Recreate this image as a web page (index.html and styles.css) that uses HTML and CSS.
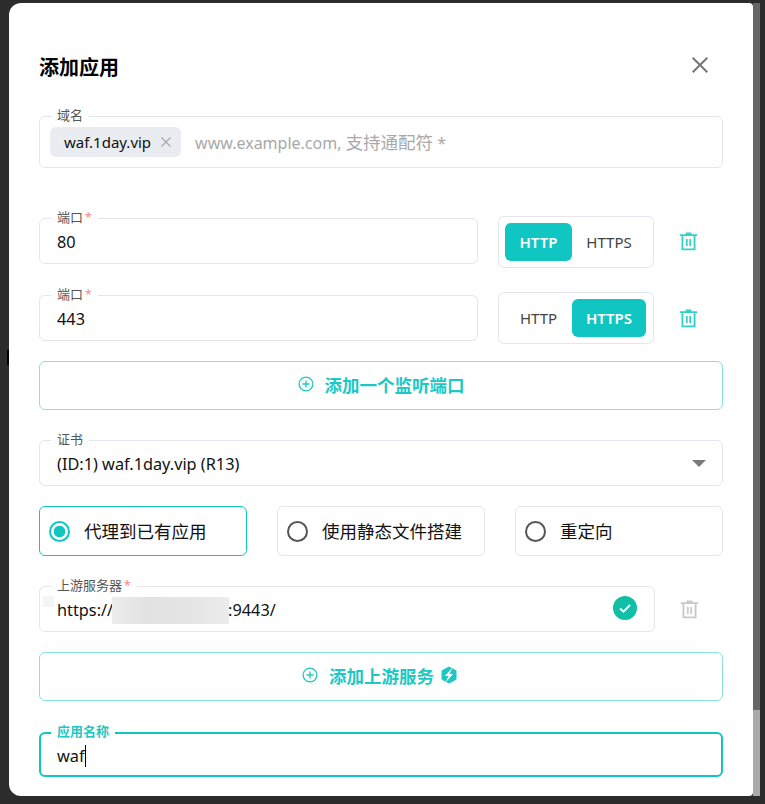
FILE: index.html
```html
<!DOCTYPE html>
<html lang="zh">
<head>
  <meta charset="UTF-8" />
  <title>添加应用</title>
  <link rel="stylesheet" href="styles.css">
</head>
<body>

  <span class="bg-mark"></span>

  <div class="dialog">
    <div class="dialog-head">
      <h2 class="dialog-title">添加应用</h2>
      <svg class="close-icon" viewBox="0 0 16 16"><path d="M1.500 1.500l13 13M14.500 1.500l-13 13" /></svg>
    </div>

    <!-- domain -->
    <div class="field field-domain">
      <span class="field-label">域名</span>
      <span class="chip">waf.1day.vip
        <svg class="chip-x" viewBox="0 0 10 10"><path d="M.5.5l9 9M9.500.500l-9 9" /></svg>
      </span>
      <span class="placeholder">www.example.com, <span class="zh">支持通配符</span> *</span>
    </div>

    <!-- ports -->
    <div class="port-row port-row-first">
      <div class="field field-port">
        <span class="field-label">端口<i class="req">*</i></span>
        80
      </div>
      <div class="toggle">
        <span class="toggle-btn http active">HTTP</span>
        <span class="toggle-btn https">HTTPS</span>
      </div>
      <svg class="trash" viewBox="0 0 18 18"><use href="#trash-icon" /></svg>
    </div>

    <div class="port-row">
      <div class="field field-port">
        <span class="field-label">端口<i class="req">*</i></span>
        443
      </div>
      <div class="toggle">
        <span class="toggle-btn http">HTTP</span>
        <span class="toggle-btn https active">HTTPS</span>
      </div>
      <svg class="trash" viewBox="0 0 18 18"><use href="#trash-icon" /></svg>
    </div>

    <div class="add-btn add-port">
      <svg class="plus-icon" viewBox="0 0 16 16"><circle cx="8" cy="8" r="6.900" /><path d="M8 4.500v7M4.500 8h7" /></svg>
      添加一个监听端口
    </div>

    <!-- certificate -->
    <div class="field field-cert">
      <span class="field-label">证书</span>
      (ID:1) waf.1day.vip (R13)
      <span class="caret"></span>
    </div>

    <div class="mode-row">
      <div class="mode selected"><span class="radio"></span><span class="mode-text">代理到已有应用</span></div>
      <div class="mode"><span class="radio"></span><span class="mode-text">使用静态文件搭建</span></div>
      <div class="mode"><span class="radio"></span><span class="mode-text">重定向</span></div>
    </div>

    <!-- upstream -->
    <div class="port-row upstream-row">
      <div class="field field-upstream">
        <span class="field-label">上游服务器<i class="req">*</i></span>
        <span class="smudge"></span>
        https://<span class="masked"></span>:9443/
        <svg class="check" viewBox="0 0 24 24"><circle cx="12" cy="12" r="12" /><path d="M7 12.500l3.500 3.200L17 9" /></svg>
      </div>
      <svg class="trash off" viewBox="0 0 18 18"><use href="#trash-icon" /></svg>
    </div>

    <div class="add-btn add-upstream">
      <svg class="plus-icon" viewBox="0 0 16 16"><circle cx="8" cy="8" r="6.900" /><path d="M8 4.500v7M4.500 8h7" /></svg>
      添加上游服务
      <svg class="pro-icon" viewBox="0 0 18 18">
        <path class="pro-hex" d="M9 1.500l6.500 3.700v7.600L9 16.500l-6.500-3.700V5.200z" />
        <path class="pro-bolt" d="M12.500 1.500L5 10h3.500l-3 6.500L13 8H9.500z" />
      </svg>
    </div>

    <div class="field field-name">
      <span class="field-label">应用名称</span>
      waf<span class="cursor"></span>
    </div>
  </div>

  <div class="scrollbar"><div class="scroll-thumb"></div></div>

  <svg class="defs" width="0" height="0">
    <symbol id="trash-icon" viewBox="0 0 18 18">
      <path d="M6.500 1.300h5v1.400h-5zM1.500 2.700h15v1.500h-15zM3 4.200h1.600v10.700h8.800V4.200H15v12.300H3zM6.800 6.800h1.500v6H6.800zM9.700 6.800h1.500v6H9.700z" />
    </symbol>
  </svg>
</body>
</html>
```

FILE: styles.css
```css
html, body {
  height: 100%;
}

body {
  margin: 0;
  background: #2c2c2c;
  font-family: "Noto Sans", "Noto Sans CJK SC", sans-serif;
  font-size: 16.3px;
  color: #111;
  overflow: hidden;
  display: flex;
  align-items: flex-start;
  padding: 3px 0 0 9px;
  box-sizing: border-box;
}

/* page behind the dialog */
.bg-mark {
  position: absolute;
  left: 7px;
  top: 350px;
  width: 2px;
  height: 15px;
  background: #000;
}

/* dialog */
.dialog {
  width: 744px;
  height: 793px;
  box-sizing: border-box;
  padding: 0 30px;
  background: #fff;
  border-radius: 12px 4px 4px 12px;
  overflow: hidden;
}

.scrollbar {
  width: 7px;
  height: 793px;
  background: #aaa;
}

.scroll-thumb {
  height: 707px;
  background: #666;
}

.dialog-head {
  display: flex;
  justify-content: space-between;
  align-items: center;
  height: 44px;
  margin: 41px 0 28px;
}

.dialog-title {
  margin: 0;
  font-size: 20px;
  font-weight: 700;
  color: #000;
}

.close-icon {
  width: 18px;
  height: 18px;
  margin: 0 14px 2px 0;
  fill: none;
  stroke: #777;
  stroke-width: 1.800;
}

/* fields */
.field {
  position: relative;
  display: flex;
  align-items: center;
  box-sizing: border-box;
  height: 46px;
  padding: 2px 17px 0;
  border: 1px solid #e3e6ef;
  border-radius: 6px;
  line-height: 24px;
}

.field-label {
  position: absolute;
  left: 11px;
  top: -10.500px;
  padding: 0 6px;
  background: #fff;
  font-size: 13px;
  line-height: 16px;
  color: #555;
}

.req {
  font-style: normal;
  font-size: 12px;
  color: #f88;
  margin-left: 2px;
}

.field-domain {
  height: 52px;
  padding: 0 10px;
}

.chip {
  display: flex;
  align-items: center;
  height: 30px;
  padding: 0 10px 0 14px;
  background: #e9ecf1;
  border-radius: 6px;
  font-size: 15px;
}

.chip-x {
  width: 10px;
  height: 10px;
  margin-left: 10px;
  fill: none;
  stroke: #aaa;
  stroke-width: 1.300;
}

.placeholder {
  margin: 1px 0 0 14px;
  font-size: 16px;
  color: #a8a8a8;
}

.zh {
  font-size: 17.500px;
}

.port-row {
  display: flex;
  align-items: center;
  margin-top: 24px;
}

.port-row-first {
  margin-top: 48px;
}

.port-row-first .field,
.port-row-first .trash {
  margin-bottom: 2px;
}

.field-port {
  flex: 1;
}

.toggle {
  display: flex;
  box-sizing: border-box;
  width: 156px;
  height: 52px;
  margin-left: 20px;
  padding: 6px;
  border: 1px solid #e3e6ef;
  border-radius: 6px;
}

.toggle-btn {
  display: flex;
  align-items: center;
  justify-content: center;
  height: 38px;
  border-radius: 6px;
  font-size: 15px;
  color: #444;
}

.toggle-btn.http {
  width: 67px;
}

.toggle-btn.https {
  width: 74px;
}

.toggle-btn.active {
  background: #0fc6c2;
  color: #fff;
  font-weight: 600;
}

.trash {
  width: 21px;
  height: 21px;
  margin: 0 24px;
  fill: #35d0cc;
}

.trash.off {
  margin-right: 23px;
  fill: #c9c9c9;
}

/* add buttons */
.add-btn {
  display: flex;
  align-items: center;
  justify-content: center;
  box-sizing: border-box;
  height: 49px;
  margin-top: 17px;
  padding-bottom: 3px;
  border: 1px solid #87e3e0;
  border-radius: 6px;
  font-size: 17.500px;
  font-weight: 600;
  color: #1cc8c4;
}

.plus-icon {
  width: 16px;
  height: 16px;
  margin-right: 11px;
  fill: none;
  stroke: #1cc8c4;
  stroke-width: 1.300;
}

.pro-icon {
  width: 18px;
  height: 18px;
  margin: 0 2px 0 6px;
}

.pro-hex {
  fill: #1cc8c4;
  stroke: #1cc8c4;
  stroke-width: 2;
  stroke-linejoin: round;
}

.pro-bolt {
  fill: #fff;
}

.field-cert {
  margin-top: 30px;
}

.caret {
  position: absolute;
  right: 16px;
  top: 19px;
  border-left: 7px solid transparent;
  border-right: 7px solid transparent;
  border-top: 7px solid #7a7a7a;
}

/* modes */
.mode-row {
  display: flex;
  gap: 30px;
  margin-top: 20px;
}

.mode {
  flex: 1;
  display: flex;
  align-items: center;
  box-sizing: border-box;
  height: 50px;
  padding: 0 9px;
  border: 1px solid #e3e6ef;
  border-radius: 6px;
  font-size: 17.500px;
}

.mode.selected {
  border-color: #0fc6c2;
}

.mode-text {
  margin-bottom: 2px;
}

.radio {
  width: 21px;
  height: 21px;
  margin-right: 14px;
  box-sizing: border-box;
  border: 2px solid #555;
  border-radius: 50%;
}

.mode.selected .radio {
  border-color: #0fc6c2;
  background: radial-gradient(circle, #0fc6c2 0 5.500px, #fff 6px);
}

/* upstream */
.upstream-row {
  margin-top: 30px;
}

.field-upstream {
  flex: 1;
}

.smudge {
  position: absolute;
  left: 3px;
  top: 9px;
  width: 11px;
  height: 11px;
  background: #f4f4f4;
}

.masked {
  width: 117px;
  height: 27px;
  margin: 0 -1px;
  background: linear-gradient(90deg, #ececec, #e2e2e2 30%, #e5e5e5 70%, #ececec);
}

.check {
  position: absolute;
  right: 17px;
  top: 9px;
  width: 24px;
  height: 24px;
  fill: #10bfa5;
}

.check path {
  fill: none;
  stroke: #fff;
  stroke-width: 2;
}

.add-upstream {
  margin-top: 20px;
}

/* focused name field */
.field-name {
  height: 45px;
  margin-top: 31px;
  border: 2px solid #0fc6c2;
  padding: 2px 16px 0;
}

.field-name .field-label {
  left: 10px;
  top: -11.500px;
  color: #1cc8c4;
  font-weight: 600;
}

.cursor {
  width: 1px;
  height: 22px;
  background: #000;
}

.defs {
  position: absolute;
}
```
